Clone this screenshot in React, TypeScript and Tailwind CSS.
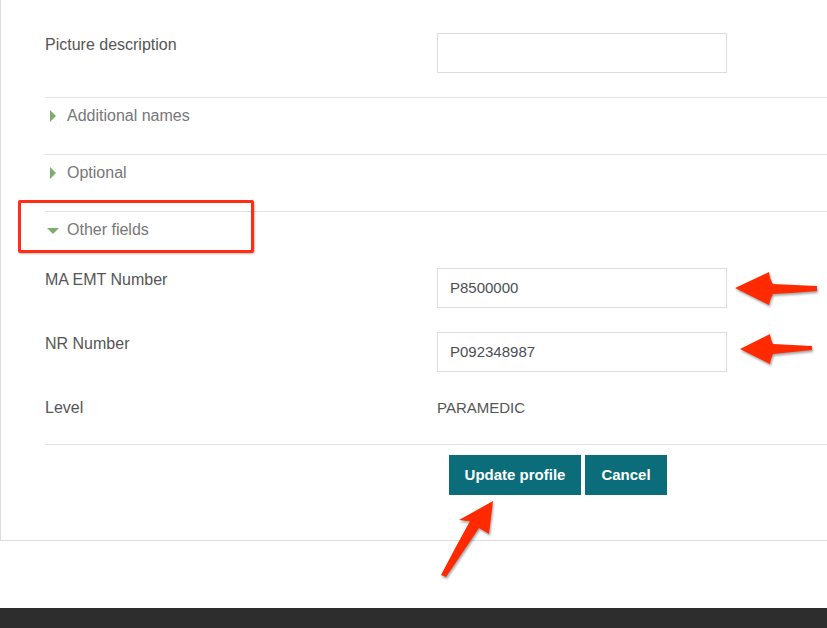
import React from 'react';

const font = { fontFamily: '"Liberation Sans", Arial, Helvetica, sans-serif' };

function Section({ title, open = false }: { title: string; open?: boolean }) {
  return (
    <div className="border-t border-[#e2e2e2] h-[57px] pt-[8px]">
      <div className="flex items-center h-[20px] text-[16px] text-[#777] leading-[20px]">
        <span className="w-[22px] flex items-center pl-[4px]">
          {open ? (
            <span className="inline-block w-0 h-0 border-l-[6px] border-r-[6px] border-t-[6px] border-l-transparent border-r-transparent border-t-[#7aad6e] mt-[2px] -ml-[2px]" />
          ) : (
            <span className="inline-block w-0 h-0 border-t-[6px] border-b-[6px] border-l-[6px] border-t-transparent border-b-transparent border-l-[#7aad6e] ml-[1px]" />
          )}
        </span>
        {title}
      </div>
    </div>
  );
}

function Field({ label, value }: { label: string; value?: string }) {
  return (
    <div className="flex items-start">
      <div className="w-[392px] pt-[2px] text-[16px] leading-[20px] text-[#555]">{label}</div>
      <div className="w-[290px] h-[40px] border border-[#dcdcdc] px-[12px] flex items-center text-[15px] text-[#4a4f55]">
        {value}
      </div>
    </div>
  );
}

export default function App() {
  return (
    <div className="relative w-[827px] h-[628px] overflow-hidden bg-white" style={font}>
      {/* form box */}
      <div className="border-l border-b border-[#dcdcdc] pl-[44px] pb-[45px]">
        <div className="pt-[33px] pb-[24px]">
          <Field label="Picture description" />
        </div>
        <Section title="Additional names" />
        <Section title="Optional" />
        <Section title="Other fields" open />

        <div className="flex flex-col gap-[24px]">
          <Field label="MA EMT Number" value="P8500000" />
          <Field label="NR Number" value="P092348987" />
          <div className="flex items-start pt-[1px]">
            <div className="w-[392px] pt-[1px] text-[16px] leading-[20px] text-[#555]">Level</div>
            <div className="pt-[1px] text-[15px] leading-[20px] text-[#555]">PARAMEDIC</div>
          </div>
        </div>

        <div className="border-t border-[#e2e2e2] mt-[26px] pt-[10px] pl-[404px] flex gap-[4px]">
          <button className="h-[40px] w-[132px] bg-[#0a6d79] text-white font-bold text-[15px]">Update profile</button>
          <button className="h-[40px] w-[82px] bg-[#0a6d79] text-white font-bold text-[15px]">Cancel</button>
        </div>
      </div>

      <div className="mt-[67px] h-[40px] bg-[#2d2d2d]" />

      {/* annotation: red box */}
      <div className="absolute left-[18px] top-[200px] w-[236px] h-[53px] border-[3px] border-[#ff2d16] rounded-[2px] shadow-[1px_1px_2px_rgba(0,0,0,0.25)] pointer-events-none" />

      {/* annotation: arrows */}
      <svg className="absolute inset-0 pointer-events-none" width="827" height="628" viewBox="0 0 827 628">
        <g fill="#ff2a00" style={{ filter: 'drop-shadow(1px 2px 1px rgba(0,0,0,0.35))' }}>
          <path d="M735,288 L769,272 Q770,280 773,284 Q795,285 817,286 L817,291 Q795,293 773,294 Q770,299 769,305 Z" />
          <path d="M740,349 L770,334 Q771,341 773,344 Q793,345 812,346 L812,350 Q793,352 773,354 Q771,358 770,364 Z" />
          <path d="M493,501 L459,520 Q466,521 470,521 Q455,548 441,575 L446,577 Q463,552 479,528 Q484,531 489,534 Z" />
        </g>
      </svg>
    </div>
  );
}
